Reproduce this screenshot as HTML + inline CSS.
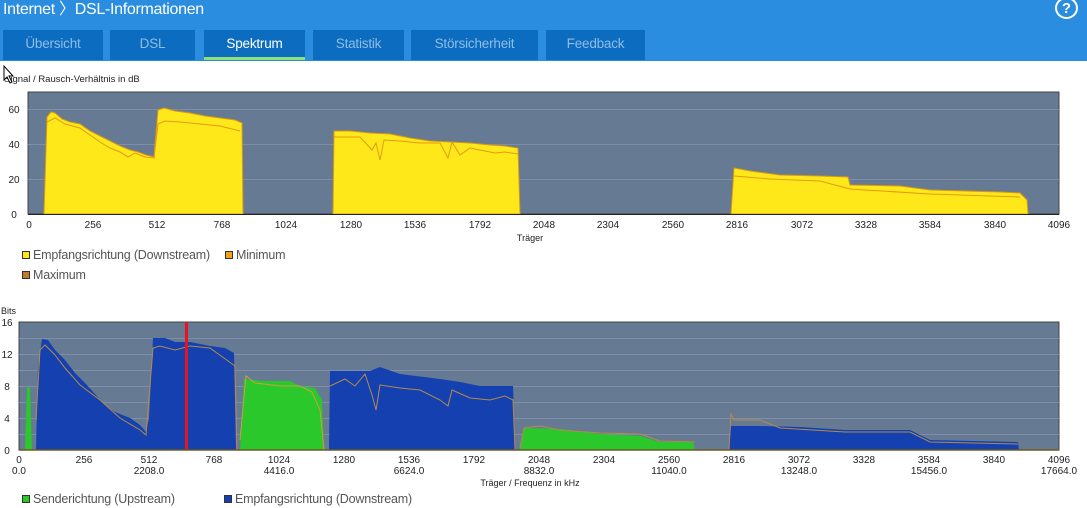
<!DOCTYPE html>
<html><head><meta charset="utf-8"><style>
*{margin:0;padding:0;box-sizing:border-box}
body{width:1087px;height:508px;overflow:hidden;background:#fff;font-family:"Liberation Sans",sans-serif;position:relative}
.hdr{position:absolute;left:0;top:0;width:1087px;height:61px;background:#2b8ddf}
.title{position:absolute;left:3px;top:0;color:#fff;font-size:16px;line-height:20px;letter-spacing:-0.3px}
.tab{position:absolute;top:30px;height:30px;background:#0b6cc0;color:#8fbde6;font-size:13.5px;text-align:center;line-height:27px;letter-spacing:-0.2px}
.tab.act{color:#fff;border-bottom:3px solid #8ee07a}
.help{position:absolute;left:1055px;top:-3px;width:23px;height:22px;border:2px solid #fff;border-radius:50%;color:#fff;font-weight:bold;font-size:15px;text-align:center;line-height:19px}
svg{position:absolute;left:0;top:0}
text{font-family:"Liberation Sans",sans-serif}
.lg{position:absolute;font-size:12.5px;color:#555;letter-spacing:-0.2px}
.sq{display:inline-block;width:8px;height:8px;border:1px solid #333;margin-right:3px;vertical-align:0px}
</style></head><body>
<div class="hdr">
<div class="title">Internet 〉DSL-Informationen</div>
<div class="help">?</div>
<div class="tab" style="left:3px;width:100px">Übersicht</div>
<div class="tab" style="left:110px;width:85px">DSL</div>
<div class="tab act" style="left:204px;width:101px">Spektrum</div>
<div class="tab" style="left:313px;width:91px">Statistik</div>
<div class="tab" style="left:411px;width:127px">Störsicherheit</div>
<div class="tab" style="left:546px;width:99px">Feedback</div>
</div>
<svg width="1087" height="508" viewBox="0 0 1087 508">
<text x="4" y="82" font-size="9.5" fill="#222">Signal / Rausch-Verhältnis in dB</text>
<rect x="28" y="92" width="1031" height="122" fill="#667a94" stroke="#444" stroke-width="1"/>
<g stroke="#7d8ea6" stroke-width="1"><line x1="28" x2="1059" y1="109.5" y2="109.5"/><line x1="28" x2="1059" y1="144.5" y2="144.5"/><line x1="28" x2="1059" y1="179.5" y2="179.5"/></g>
<polygon fill="#ffe81a" stroke="#d99a10" stroke-width="1" points="44,214 47,117 51,112 55,113 62,119 70,122 80,124 90,131 100,136 110,141 120,146 130,150 138,152 146,155 154,157 158,110 164,108 175,111 190,113 205,116 220,118 235,120 242,123 243,214"/>
<polyline fill="none" stroke="#e39a12" stroke-width="1" points="47,122 55,118 65,124 80,128 100,142 110,148 120,152 128,157 135,153 145,157 154,158 158,124 165,121 180,122 200,124 220,126 240,131"/>
<polygon fill="#ffe81a" stroke="#d99a10" stroke-width="1" points="333,214 334,131 350,131 370,133 390,134 410,138 430,141 450,142 470,143 490,145 505,146 518,148 520,214"/>
<polyline fill="none" stroke="#e39a12" stroke-width="1" points="334,137 360,137 372,150 376,143 380,160 384,140 400,141 420,143 440,143 448,158 452,142 460,155 470,148 480,150 495,153 505,152 518,154"/>
<polygon fill="#ffe81a" stroke="#d99a10" stroke-width="1" points="731,214 734,168 750,171 780,175 820,176 848,177 850,185 900,186 930,190 1000,192 1020,193 1027,200 1028,214"/>
<polyline fill="none" stroke="#e39a12" stroke-width="1" points="734,176 770,179 820,181 850,189 930,194 1020,197"/>
<line x1="28" x2="1059" y1="214.5" y2="214.5" stroke="#222"/>
<g font-size="10" fill="#222" text-anchor="middle">
<text x="14" y="113">60</text><text x="14" y="148">40</text><text x="14" y="183">20</text><text x="14" y="218">0</text>
<text x="29" y="228">0</text><text x="93" y="228">256</text><text x="157" y="228">512</text><text x="222" y="228">768</text><text x="286" y="228">1024</text><text x="351" y="228">1280</text><text x="415" y="228">1536</text><text x="480" y="228">1792</text><text x="544" y="228">2048</text><text x="608" y="228">2304</text><text x="673" y="228">2560</text><text x="737" y="228">2816</text><text x="802" y="228">3072</text><text x="866" y="228">3328</text><text x="930" y="228">3584</text><text x="995" y="228">3840</text><text x="1059" y="228">4096</text>
<text x="530" y="241" font-size="9">Träger</text>
</g>
<text x="1" y="314" font-size="9" fill="#222">Bits</text>
<rect x="19" y="322" width="1040" height="128" fill="#667a94" stroke="#444"/>
<g stroke="#7d8ea6"><line x1="19" x2="1059" y1="338.5" y2="338.5"/><line x1="19" x2="1059" y1="354.5" y2="354.5"/><line x1="19" x2="1059" y1="370.5" y2="370.5"/><line x1="19" x2="1059" y1="386.5" y2="386.5"/><line x1="19" x2="1059" y1="402.5" y2="402.5"/><line x1="19" x2="1059" y1="418.5" y2="418.5"/><line x1="19" x2="1059" y1="434.5" y2="434.5"/></g>
<polygon fill="#2ac82a" points="25,450 27,387 30,388 32,450"/>
<polygon fill="#1440b0" points="36,450 38,368 42,339 48,340 55,350 65,360 75,373 85,383 95,394 105,405 115,412 130,418 140,425 146,432 149,418 153,338 165,338 175,342 190,342 210,346 225,348 234,353 236,450"/>
<polyline fill="none" stroke="#b58a4c" stroke-width="1" points="36,420 40,350 45,345 55,355 65,368 80,385 100,400 120,418 140,430 146,435 153,348 160,346 175,350 190,346 210,348 235,366 237,450"/>
<polygon fill="#2ac82a" points="240,450 244,379 265,381 290,381 300,386 315,388 322,400 324,450"/>
<polyline fill="none" stroke="#c8a040" stroke-width="1" points="240,440 246,376 255,383 280,386 300,386 312,392 320,410 324,450"/>
<polygon fill="#1440b0" points="329,450 330,371 370,371 380,367 400,374 440,379 460,382 480,386 500,386 513,386 515,450"/>
<polyline fill="none" stroke="#b58a4c" stroke-width="1" points="330,386 345,379 355,386 365,374 372,395 376,410 380,385 400,388 420,390 440,400 448,406 452,390 470,398 490,400 505,396 513,400 515,450"/>
<polygon fill="#2ac82a" points="520,450 524,428 560,429 600,434 640,436 660,442 693,442 695,450"/>
<polyline fill="none" stroke="#b58a4c" stroke-width="1" points="520,448 524,428 540,426 560,430 600,433 640,434 660,441 695,442"/>
<polygon fill="#1440b0" points="729,450 731,426 760,426 800,427 845,430 910,430 930,440 1018,442 1019,450"/>
<polyline fill="none" stroke="#b58a4c" stroke-width="1" points="729,450 731,414 734,420 760,420 780,428 845,432 910,432 930,442 1018,444"/>
<rect x="185" y="322" width="3" height="128" fill="#e8141c"/>
<line x1="19" x2="1059" y1="450" y2="450" stroke="#6b5a20" stroke-width="1.5"/>
<g font-size="10" fill="#222" text-anchor="middle">
<text x="7" y="326">16</text><text x="7" y="358">12</text><text x="7" y="390">8</text><text x="7" y="422">4</text><text x="7" y="454">0</text>
<text x="19" y="463">0</text><text x="84" y="463">256</text><text x="149" y="463">512</text><text x="214" y="463">768</text><text x="279" y="463">1024</text><text x="344" y="463">1280</text><text x="409" y="463">1536</text><text x="474" y="463">1792</text><text x="539" y="463">2048</text><text x="604" y="463">2304</text><text x="669" y="463">2560</text><text x="734" y="463">2816</text><text x="799" y="463">3072</text><text x="864" y="463">3328</text><text x="929" y="463">3584</text><text x="994" y="463">3840</text><text x="1059" y="463">4096</text>
<text x="19" y="474">0.0</text><text x="149" y="474">2208.0</text><text x="279" y="474">4416.0</text><text x="409" y="474">6624.0</text><text x="539" y="474">8832.0</text><text x="669" y="474">11040.0</text><text x="799" y="474">13248.0</text><text x="929" y="474">15456.0</text><text x="1059" y="474">17664.0</text>
<text x="530" y="486" font-size="9">Träger / Frequenz in kHz</text>
</g>
<path d="M4,66 L4,80 L7,77 L10,83 L12,82 L9,76 L13,76 Z" fill="#fff" stroke="#000" stroke-width="1"/>
</svg>
<div class="lg" style="left:22px;top:248px"><span class="sq" style="background:#ffe81a"></span>Empfangsrichtung (Downstream)</div>
<div class="lg" style="left:225px;top:248px"><span class="sq" style="background:#f0a020"></span>Minimum</div>
<div class="lg" style="left:22px;top:268px"><span class="sq" style="background:#c07a30"></span>Maximum</div>
<div class="lg" style="left:22px;top:492px"><span class="sq" style="background:#2ac82a"></span>Senderichtung (Upstream)</div>
<div class="lg" style="left:224px;top:492px"><span class="sq" style="background:#1440b0"></span>Empfangsrichtung (Downstream)</div>
</body></html>
